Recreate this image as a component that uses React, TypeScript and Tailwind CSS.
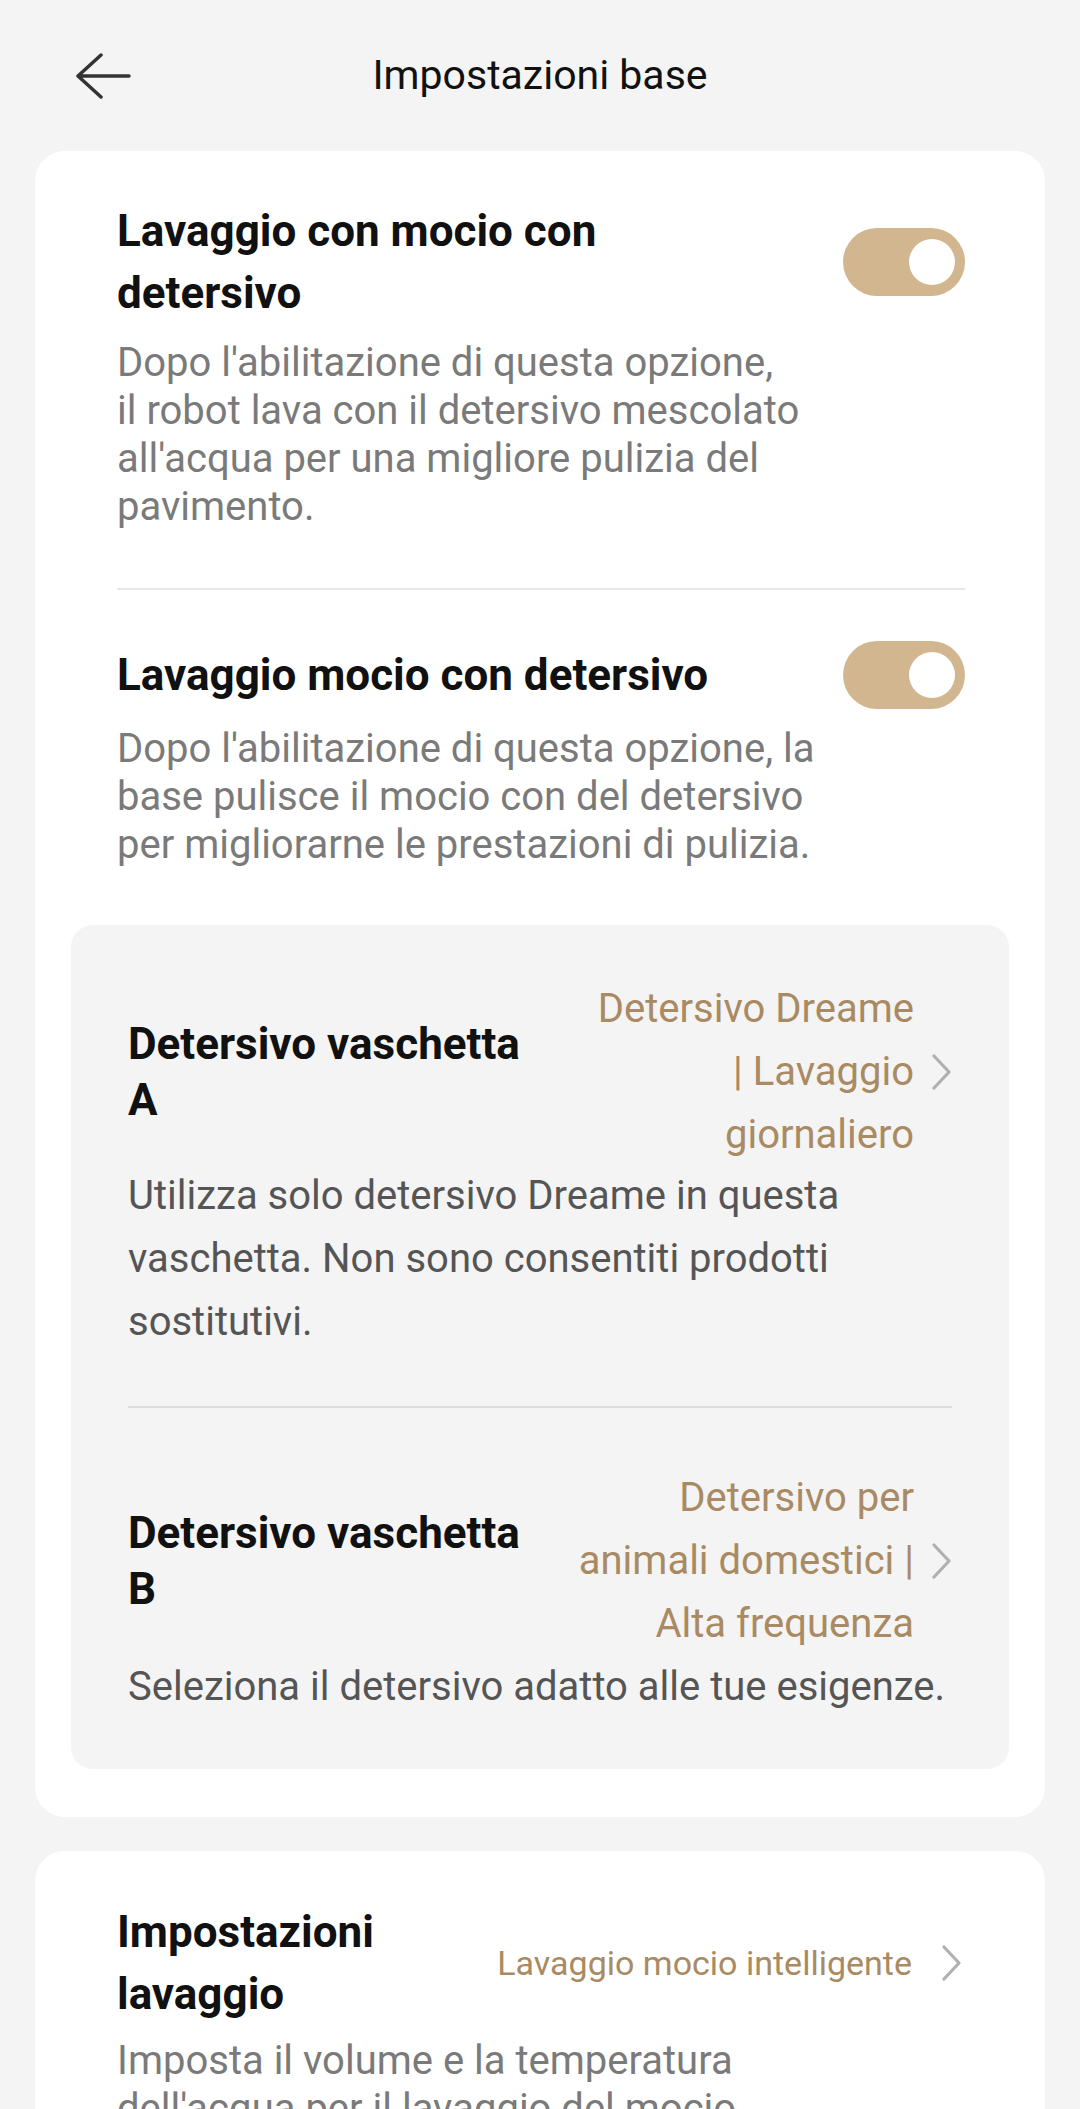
import React from 'react'

const lines = (arr: string[]) => arr.map((l, i) => <span key={i} className="block whitespace-nowrap">{l}</span>)

function Toggle() {
  return (
    <div className="flex h-[68px] w-[122px] shrink-0 items-center justify-end rounded-full bg-[#d1b68f] pr-[10px]">
      <div className="h-[46px] w-[46px] rounded-full bg-white" />
    </div>
  )
}

function Chevron() {
  return (
    <svg width="22" height="36" viewBox="0 0 22 36" fill="none" className="shrink-0">
      <polyline points="4,2 19,18 4,34" stroke="#b0b0b0" strokeWidth="3.2" strokeLinecap="round" strokeLinejoin="round" />
    </svg>
  )
}

function BackArrow() {
  return (
    <svg width="56" height="46" viewBox="0 0 56 46" fill="none">
      <path d="M3 23 H54 M26 2 L3 23 L26 44" stroke="#333" strokeWidth="3.5" strokeLinecap="round" strokeLinejoin="round" />
    </svg>
  )
}

export default function App() {
  return (
    <div className="min-h-[2109px] bg-[#f4f4f4] font-['Roboto','Noto_Sans',sans-serif] pb-[60px]">
      {/* HEADER */}
      <div className="grid h-[151px] grid-cols-[1fr_auto_1fr] items-center">
        <div className="pl-[75px]">
          <BackArrow />
        </div>
        <h1 className="text-[41px] leading-none text-[#111]">Impostazioni base</h1>
        <div />
      </div>

      {/* CARD DETERSIVO */}
      <div className="mx-[35px] rounded-[30px] bg-white px-[36px] pt-[49px] pb-[48px]">
        <div className="pl-[46px] pr-[44px]">
          <div className="flex items-center justify-between">
            <div className="text-[44px] font-bold leading-[62px] text-[#111]">
              {lines(['Lavaggio con mocio con', 'detersivo'])}
            </div>
            <Toggle />
          </div>
          <div className="mt-[15px] text-[40px] leading-[48px] text-[#7a7a7a]">
            {lines([
              "Dopo l'abilitazione di questa opzione,",
              'il robot lava con il detersivo mescolato',
              "all'acqua per una migliore pulizia del",
              'pavimento.',
            ])}
          </div>

          <div className="mt-[57px] h-[2px] bg-[#e8e8e8]" />

          <div className="mt-[51px] flex items-center justify-between">
            <div className="text-[44px] font-bold leading-[62px] text-[#111]">Lavaggio mocio con detersivo</div>
            <Toggle />
          </div>
          <div className="mt-[16px] text-[40px] leading-[48px] text-[#7a7a7a]">
            {lines([
              "Dopo l'abilitazione di questa opzione, la",
              'base pulisce il mocio con del detersivo',
              'per migliorarne le prestazioni di pulizia.',
            ])}
          </div>
        </div>

        {/* VASCHETTE */}
        <div className="mt-[56px] rounded-[22px] bg-[#f4f4f4] px-[57px] pt-[52px] pb-[51px]">
          <div className="flex items-center justify-between">
            <div className="text-[44px] font-bold leading-[56px] text-[#111]">
              {lines(['Detersivo vaschetta', 'A'])}
            </div>
            <div className="flex items-center gap-[16px]">
              <div className="text-right text-[40px] leading-[63px] text-[#a98a63]">
                {lines(['Detersivo Dreame', '| Lavaggio', 'giornaliero'])}
              </div>
              <Chevron />
            </div>
          </div>
          <div className="-mt-[2px] text-[40px] leading-[63px] text-[#555]">
            {lines(['Utilizza solo detersivo Dreame in questa', 'vaschetta. Non sono consentiti prodotti', 'sostitutivi.'])}
          </div>

          <div className="mt-[53px] h-[2px] bg-[#dcdcdc]" />

          <div className="mt-[58px] flex items-center justify-between">
            <div className="text-[44px] font-bold leading-[56px] text-[#111]">
              {lines(['Detersivo vaschetta', 'B'])}
            </div>
            <div className="flex items-center gap-[16px]">
              <div className="text-right text-[40px] leading-[63px] text-[#a98a63]">
                {lines(['Detersivo per', 'animali domestici |', 'Alta frequenza'])}
              </div>
              <Chevron />
            </div>
          </div>
          <div className="text-[40px] leading-[63px] text-[#555]">
            Seleziona il detersivo adatto alle tue esigenze.
          </div>
        </div>
      </div>

      {/* CARD LAVAGGIO */}
      <div className="mx-[35px] mt-[34px] rounded-[30px] bg-white px-[36px] pt-[50px] pb-[48px]">
        <div className="pl-[46px] pr-[47px]">
          <div className="flex items-center justify-between">
            <div className="text-[44px] font-bold leading-[62px] text-[#111]">
              {lines(['Impostazioni', 'lavaggio'])}
            </div>
            <div className="flex items-center gap-[28px]">
              <span className="text-[34px] leading-none text-[#a98a63]">Lavaggio mocio intelligente</span>
              <Chevron />
            </div>
          </div>
          <div className="mt-[12px] text-[40px] leading-[48px] text-[#7a7a7a]">
            {lines(['Imposta il volume e la temperatura', "dell'acqua per il lavaggio del mocio"])}
          </div>
        </div>
      </div>
    </div>
  )
}
